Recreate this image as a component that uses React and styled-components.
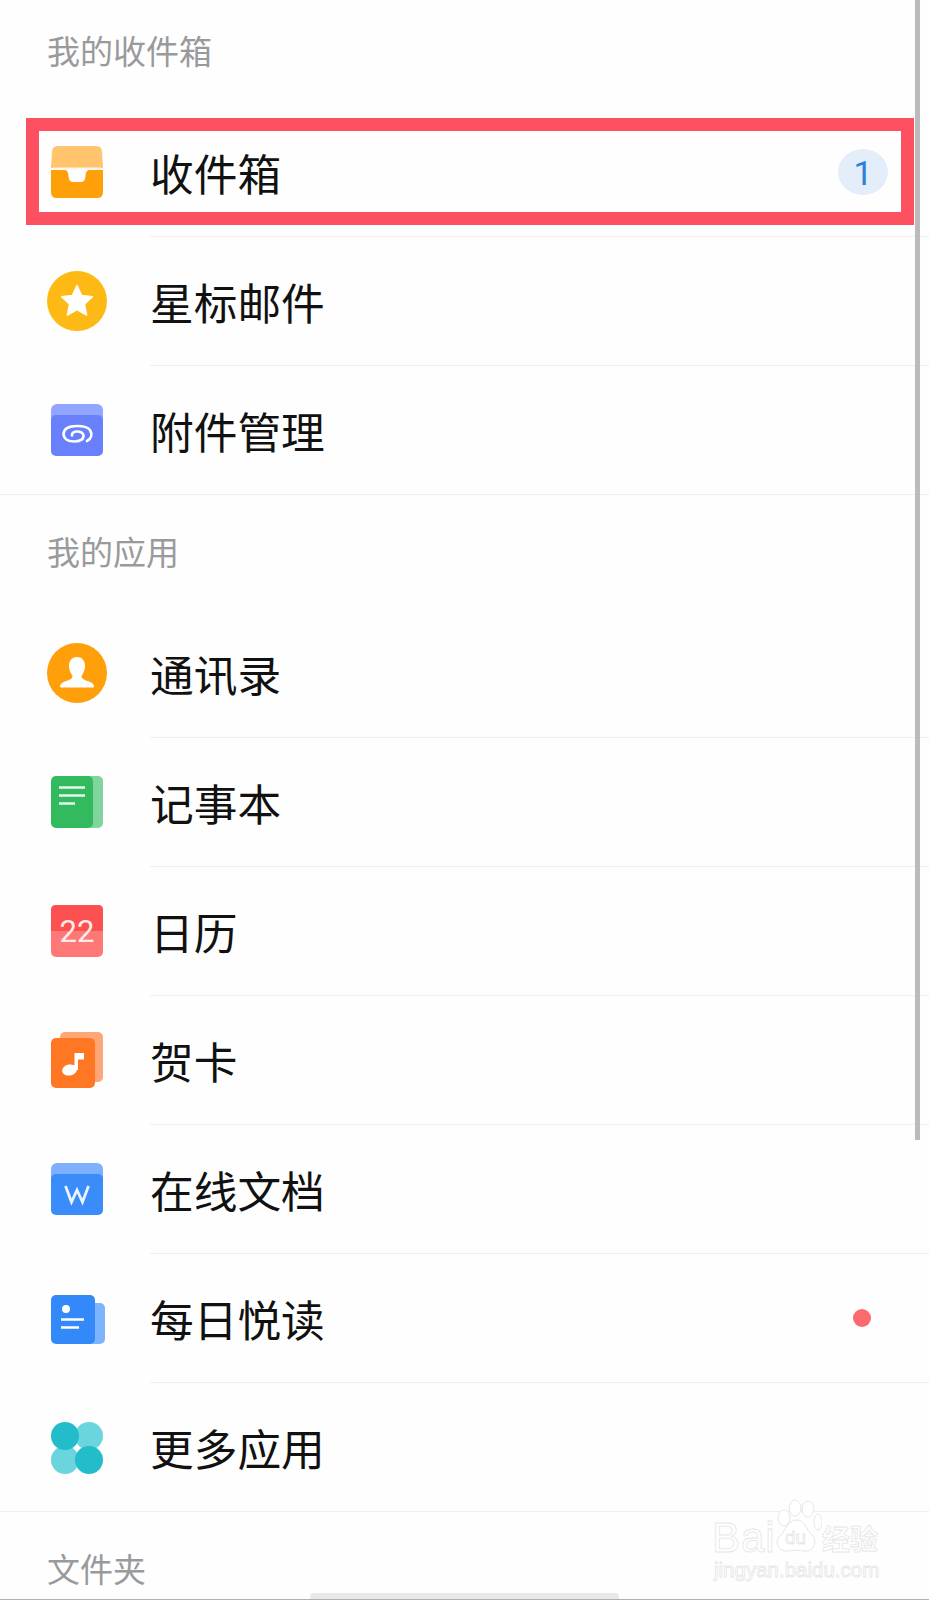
import React from "react";
import styled, { createGlobalStyle } from "styled-components";

const Global = createGlobalStyle`
  html, body { margin: 0; padding: 0; background: #fefefe; }
`;

const Page = styled.div`
  position: relative;
  width: 929px;
  height: 1600px;
  overflow: hidden;
  background: #fefefe;
  font-family: "Noto Sans CJK SC", "Noto Sans", sans-serif;
`;

const Section = styled.section`
  border-bottom: ${(p) => (p.$last ? "none" : "1px solid #eeeeee")};
`;

const SectionLabel = styled.div`
  height: ${(p) => (p.$first ? "108px" : "114px")};
  padding: ${(p) => (p.$first ? "27px" : "33px")} 0 0 47px;
  box-sizing: border-box;
  font-size: 33px;
  line-height: 46px;
  color: #999a9c;
`;

const Row = styled.div`
  position: relative;
  display: flex;
  align-items: center;
  height: ${(p) => (p.$last ? "128px" : "129px")};
  padding-left: 47px;
`;

const IconSlot = styled.div`
  flex: none;
  width: 60px;
  height: 60px;
  margin-right: 43px;
  display: flex;
  align-items: center;
  justify-content: center;
  position: relative;
  top: ${(p) => p.$nudge || 0}px;
  left: ${(p) => p.$shift || 0}px;
`;

const RowMain = styled.div`
  flex: 1;
  height: 100%;
  box-sizing: border-box;
  display: flex;
  align-items: center;
  justify-content: space-between;
  padding-right: 41px;
  border-bottom: ${(p) => (p.$last ? "none" : "1px solid #efefef")};
`;

const RowTitle = styled.span`
  font-size: 43.7px;
  line-height: 60px;
  color: #111111;
`;

const Trailing = styled.div`
  width: 50px;
  display: flex;
  justify-content: center;
`;

const Badge = styled.div`
  width: 50px;
  height: 46px;
  border-radius: 50%;
  background: #e3eefa;
  color: #2f80d8;
  font-family: Roboto, sans-serif;
  font-size: 34px;
  line-height: 48px;
  text-align: center;
`;

const Dot = styled.div`
  width: 18px;
  height: 18px;
  margin-right: 2px;
  border-radius: 50%;
  background: #fb6a6c;
`;

const Highlight = styled.div`
  position: absolute;
  left: 26px;
  top: 10px;
  width: 888px;
  height: 107px;
  box-sizing: border-box;
  border: 13px solid #fd5060;
  pointer-events: none;
`;

const ScrollV = styled.div`
  position: absolute;
  top: 0;
  left: 915px;
  width: 5px;
  height: 1140px;
  background: #bbbbbb;
`;

const ScrollH = styled.div`
  position: absolute;
  left: 310px;
  bottom: 0;
  width: 309px;
  height: 7px;
  border-radius: 4px 4px 0 0;
  background: #e8e8e8;
`;

const BottomLine = styled.div`
  position: absolute;
  left: 0;
  right: 0;
  bottom: 0;
  height: 1px;
  background: #b0b0b0;
`;

const Watermark = styled.div`
  position: absolute;
  left: 712px;
  top: 1498px;
  width: 170px;
  height: 86px;
  color: #ffffff;
  -webkit-text-stroke: 0.8px #e6e6e6;
  pointer-events: none;
`;

const MarkBai = styled.span`
  position: absolute;
  left: 0;
  top: 22px;
  font-family: "Liberation Sans", sans-serif;
  font-size: 42px;
  line-height: 36px;
  letter-spacing: 1px;
`;

const MarkPaw = styled.svg`
  position: absolute;
  left: 60px;
  top: 0;
`;

const MarkCn = styled.span`
  position: absolute;
  left: 110px;
  top: 22px;
  font-size: 28px;
  line-height: 36px;
  font-weight: 700;
`;

const MarkUrl = styled.span`
  position: absolute;
  left: 2px;
  top: 60px;
  font-family: "Liberation Sans", sans-serif;
  font-size: 20.5px;
  line-height: 24px;
  white-space: nowrap;
`;

const Svg = ({ w = 60, h = 60, children }) => (
  <svg width={w} height={h} viewBox={`0 0 ${w} ${h}`}>{children}</svg>
);

const InboxIcon = () => (
  <Svg w={52} h={52}>
    <path d="M0 22 L1 6 Q1 0 7 0 H45 Q51 0 51 6 L52 22 Z" fill="#ffc46c" />
    <path d="M0 24 H14 Q16 24 17 27 L18 33 Q19 36 22 36 H30 Q33 36 34 33 L35 27 Q36 24 38 24 H52 V46 Q52 52 46 52 H6 Q0 52 0 46 Z" fill="#ff9f0a" />
    <path d="M2 22.5 H50" stroke="#fff6e6" strokeWidth="2" />
  </Svg>
);

const StarIcon = () => (
  <Svg>
    <circle cx="30" cy="30" r="30" fill="#ffb915" />
    <path d="M30 14.5 L34.6 24.6 L45.4 25.8 L37.4 33.2 L39.6 44 L30 38.6 L20.4 44 L22.6 33.2 L14.6 25.8 L25.4 24.6 Z" fill="#fff" stroke="#fff" strokeWidth="1.5" strokeLinejoin="round" />
  </Svg>
);

const AttachIcon = () => (
  <Svg w={52} h={52}>
    <rect x="0" y="0" width="52" height="30" rx="6" fill="#93a6ff" />
    <rect x="0" y="11" width="52" height="41" rx="5" fill="#6880fb" />
    <path d="M36 37 Q43 33 39 26 Q36 22 26 22 Q13 22 12.5 30 Q13 37.5 24 37.5 Q33 37 32.5 31 Q31 27 25 27.5 Q20.5 28.5 21 31.5" fill="none" stroke="#fff" strokeWidth="2.6" strokeLinecap="round" />
  </Svg>
);

const ContactIcon = () => (
  <Svg>
    <circle cx="30" cy="30" r="30" fill="#ff9f0a" />
    <path d="M30 14 C35.5 14 38 18 38 23 C38 28 35.5 31 34.5 33 C34.5 36 38 37 42 38.5 C45 39.5 46.5 41 47 43 C47.2 44.2 46.5 44.5 45.5 44.5 H14.5 C13.5 44.5 12.8 44.2 13 43 C13.5 41 15 39.5 18 38.5 C22 37 25.5 36 25.5 33 C24.5 31 22 28 22 23 C22 18 24.5 14 30 14 Z" fill="#fff" />
  </Svg>
);

const NotesIcon = () => (
  <Svg w={52} h={52}>
    <rect x="26" y="0" width="26" height="52" rx="5" fill="#80d59c" />
    <rect x="0" y="0" width="42" height="52" rx="5" fill="#33ba5f" />
    <path d="M8 11.5 H34 M8 19.5 H34 M8 27.5 H24" stroke="#e6f7ec" strokeWidth="2.6" />
  </Svg>
);

const CalendarIcon = () => (
  <Svg w={52} h={52}>
    <rect x="0" y="0" width="52" height="52" rx="5" fill="#ff7878" />
    <path d="M0 26 V5 Q0 0 5 0 H47 Q52 0 52 5 V26 Z" fill="#fd5050" />
    <text x="26" y="37" textAnchor="middle" fontFamily="Roboto, sans-serif" fontWeight="400" fontSize="31" fill="#ffecec">22</text>
  </Svg>
);

const CardIcon = () => (
  <Svg w={52} h={56}>
    <rect x="9" y="0" width="43" height="50" rx="5" fill="#ffa676" />
    <rect x="0" y="6" width="44" height="50" rx="5" fill="#ff7723" />
    <ellipse cx="18.5" cy="38" rx="7.5" ry="5.5" fill="#fff" transform="rotate(-12 18.5 38)" />
    <path d="M23.5 38 V21 H33 V27.5 H27 V38 Z" fill="#fff" />
  </Svg>
);

const DocIcon = () => (
  <Svg w={52} h={52}>
    <rect x="0" y="0" width="52" height="30" rx="6" fill="#7db1ff" />
    <rect x="0" y="11" width="52" height="41" rx="5" fill="#3a8cfb" />
    <path d="M14.5 23 L20.5 39 L26 27 L31.5 39 L37.5 23" fill="none" stroke="#eaf3ff" strokeWidth="2.8" strokeLinejoin="miter" />
  </Svg>
);

const ReadIcon = () => (
  <Svg w={54} h={50}>
    <rect x="24" y="8" width="30" height="41" rx="5" fill="#7cb4ff" />
    <rect x="0" y="0" width="44" height="49" rx="5" fill="#3489fa" />
    <circle cx="15" cy="14" r="4" fill="#fff" />
    <path d="M10 24.5 H33 M10 32.5 H28" stroke="#fff" strokeWidth="2.4" />
  </Svg>
);

const MoreIcon = () => (
  <Svg w={52} h={52}>
    <circle cx="38" cy="14" r="14" fill="#6ad5dd" />
    <circle cx="14" cy="38" r="14" fill="#6ad5dd" />
    <circle cx="14" cy="14" r="14" fill="#22bccb" />
    <circle cx="38" cy="38" r="14" fill="#22bccb" />
  </Svg>
);

const inbox = [
  { title: "收件箱", Icon: InboxIcon, badge: "1", marked: true, nudge: -1 },
  { title: "星标邮件", Icon: StarIcon, nudge: -1 },
  { title: "附件管理", Icon: AttachIcon },
];

const apps = [
  { title: "通讯录", Icon: ContactIcon, nudge: -1 },
  { title: "记事本", Icon: NotesIcon, nudge: -1 },
  { title: "日历", Icon: CalendarIcon, nudge: -1 },
  { title: "贺卡", Icon: CardIcon, nudge: -1 },
  { title: "在线文档", Icon: DocIcon, nudge: -1 },
  { title: "每日悦读", Icon: ReadIcon, dot: true, nudge: 1, shift: 1 },
  { title: "更多应用", Icon: MoreIcon, nudge: 1 },
];

const ListRow = ({ item, last }) => (
  <Row $last={last}>
    <IconSlot $nudge={item.nudge} $shift={item.shift}><item.Icon /></IconSlot>
    <RowMain $last={last}>
      <RowTitle>{item.title}</RowTitle>
      {item.badge && <Trailing><Badge>{item.badge}</Badge></Trailing>}
      {item.dot && <Trailing><Dot /></Trailing>}
    </RowMain>
    {item.marked && <Highlight />}
  </Row>
);

export default function App() {
  return (
    <Page>
      <Global />
      <Section>
        <SectionLabel $first>我的收件箱</SectionLabel>
        {inbox.map((item, i) => (
          <ListRow key={item.title} item={item} last={i === inbox.length - 1} />
        ))}
      </Section>
      <Section>
        <SectionLabel>我的应用</SectionLabel>
        {apps.map((item, i) => (
          <ListRow key={item.title} item={item} last={i === apps.length - 1} />
        ))}
      </Section>
      <Section $last>
        <SectionLabel>文件夹</SectionLabel>
      </Section>
      <ScrollV />
      <ScrollH />
      <BottomLine />
      <Watermark>
        <MarkBai>Bai</MarkBai>
        <MarkPaw width="50" height="58" viewBox="0 0 50 58">
          <g fill="#fff" stroke="#e6e6e6" strokeWidth="1">
            <ellipse cx="12" cy="20" rx="6" ry="8" />
            <ellipse cx="23" cy="10" rx="6" ry="8" />
            <ellipse cx="36" cy="11" rx="6" ry="8" />
            <ellipse cx="46" cy="24" rx="4" ry="8" />
            <path d="M25 22 C33 22 34 32 40 37 C46 43 42 54 33 53 C27 52 22 52 16 53 C6 54 2 44 8 38 C14 32 16 22 25 22 Z" />
          </g>
          <text x="13" y="46" fontFamily="Liberation Sans, sans-serif" fontSize="19" fill="#fff" stroke="#e6e6e6" strokeWidth="0.8">du</text>
        </MarkPaw>
        <MarkCn>经验</MarkCn>
        <MarkUrl>jingyan.baidu.com</MarkUrl>
      </Watermark>
    </Page>
  );
}
